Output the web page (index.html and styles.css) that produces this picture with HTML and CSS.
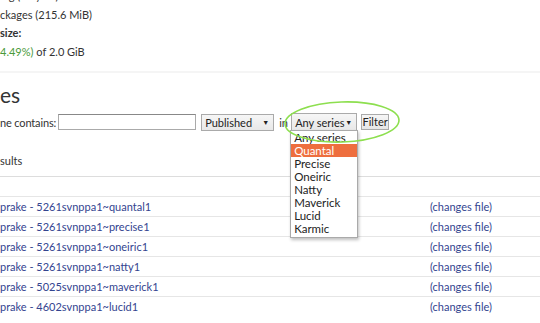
FILE: index.html
```html
<!DOCTYPE html>
<html lang="en">
<head>
  <meta charset="UTF-8">
  <title>PPA packages</title>
  <link rel="stylesheet" href="styles.css">
</head>
<body>
  <div class="summary">
    <p>ing (0 bytes)</p>
    <p>ckages (215.6 MiB)</p>
    <p class="label">size:</p>
    <p><span class="pct">4.49%)</span> of 2.0 GiB</p>
  </div>

  <h2 class="heading">es</h2>

  <div class="filter-row">
    <label class="filter-label">ne contains:</label>
    <span class="text-input"></span>
    <span class="select select-status">Published <span class="arrow">&#9660;</span></span>
    <span class="in-word">in</span>
    <div class="series-wrap">
      <span class="select select-series">Any series <span class="arrow">&#9660;</span></span>
      <ul class="series-list">
        <li>Any series</li>
        <li class="active">Quantal</li>
        <li>Precise</li>
        <li>Oneiric</li>
        <li>Natty</li>
        <li>Maverick</li>
        <li>Lucid</li>
        <li>Karmic</li>
      </ul>
    </div>
    <span class="button">Filter</span>
    <svg class="circle-mark" width="120" height="46" viewBox="0 0 120 46">
      <ellipse cx="58" cy="22" rx="57" ry="20" fill="none" stroke="#8ddf4f" stroke-width="1.6" transform="rotate(-2 58 22)"/>
    </svg>
  </div>

  <p class="results">sults</p>

  <table class="packages">
    <colgroup><col class="col-name"><col></colgroup>
    <thead>
      <tr><th></th><th></th></tr>
    </thead>
    <tbody>
      <tr><td><a href="#">prake - 5261svnppa1~quantal1</a></td><td><a href="#">(changes file)</a></td></tr>
      <tr><td><a href="#">prake - 5261svnppa1~precise1</a></td><td><a href="#">(changes file)</a></td></tr>
      <tr><td><a href="#">prake - 5261svnppa1~oneiric1</a></td><td><a href="#">(changes file)</a></td></tr>
      <tr><td><a href="#">prake - 5261svnppa1~natty1</a></td><td><a href="#">(changes file)</a></td></tr>
      <tr><td><a href="#">prake - 5025svnppa1~maverick1</a></td><td><a href="#">(changes file)</a></td></tr>
      <tr><td><a href="#">prake - 4602svnppa1~lucid1</a></td><td><a href="#">(changes file)</a></td></tr>
    </tbody>
  </table>
</body>
</html>
```

FILE: styles.css
```css
body {
  margin: 0;
  background: #fff;
  color: #333;
  font-family: Lato, 'Noto Sans', sans-serif;
  font-size: 11px;
  overflow: hidden;
}

p { margin: 0; white-space: nowrap; }

.summary {
  margin-top: -12.75px;
  padding-bottom: 10px;
  border-bottom: 2px solid #f5f5f5;
  line-height: 18.5px;
}
.summary .label { font-weight: bold; }
.pct { color: #4a9a3a; }

.heading {
  margin: 10px 0 0 0;
  font-size: 21px;
  font-weight: normal;
  line-height: 24px;
}

.filter-row {
  position: relative;
  display: flex;
  align-items: center;
  height: 18px;
  margin-top: 6px;
  white-space: nowrap;
}
.filter-row > * { flex-shrink: 0; }
.filter-label { margin-right: 2px; letter-spacing: -0.15px; }
.text-input {
  box-sizing: border-box;
  width: 138px;
  height: 16px;
  border: 1px solid #aaa;
  border-top-color: #888;
  background: #fff;
}
.select {
  display: flex;
  align-items: center;
  justify-content: space-between;
  box-sizing: border-box;
  height: 17px;
  padding: 0 4px 0 3px;
  border: 1px solid #aaa;
  background: linear-gradient(#f6f6f6, #e8e8e8);
  color: #222;
  font-size: 11px;
  white-space: nowrap;
}
.select .arrow { font-size: 7px; }
.select-status { width: 73px; margin-left: 5px; }
.in-word { margin-left: 5px; width: 12px; }
.series-wrap { position: relative; }
.select-series { width: 66px; height: 18px; }
.series-list {
  position: absolute;
  top: 17px;
  left: -1px;
  width: 66px;
  margin: 0;
  padding: 0 0 2px 0;
  list-style: none;
  background: #fff;
  border: 1px solid #aaa;
  box-shadow: 1px 2px 3px rgba(0,0,0,0.25);
  z-index: 2;
}
.series-list li {
  height: 13px;
  line-height: 13px;
  padding-left: 3px;
  font-size: 11.5px;
  color: #222;
  white-space: nowrap;
}
.series-list li.active { background: #ee6e3e; color: #fff; }
.button {
  box-sizing: border-box;
  height: 16px;
  width: 28px;
  margin-left: 4px;
  line-height: 14px;
  text-align: center;
  border: 1px solid #aaa;
  background: linear-gradient(#f6f6f6, #e6e6e6);
  font-size: 11px;
  color: #222;
}
.circle-mark {
  position: absolute;
  left: 284px;
  top: -13px;
  z-index: 3;
}

.results {
  margin-top: 23px;
  line-height: 14px;
}

.packages {
  width: 100%;
  margin-top: 8px;
  border-collapse: collapse;
  table-layout: fixed;
}
.col-name { width: 430px; }
.packages th {
  height: 19px;
  padding: 0;
  border-top: 1px solid #ddd;
}
.packages td {
  height: 19px;
  padding: 0;
  border-top: 1px solid #e6e6e6;
  white-space: nowrap;
}
.packages a {
  color: #33448f;
  text-decoration: none;
}
```
